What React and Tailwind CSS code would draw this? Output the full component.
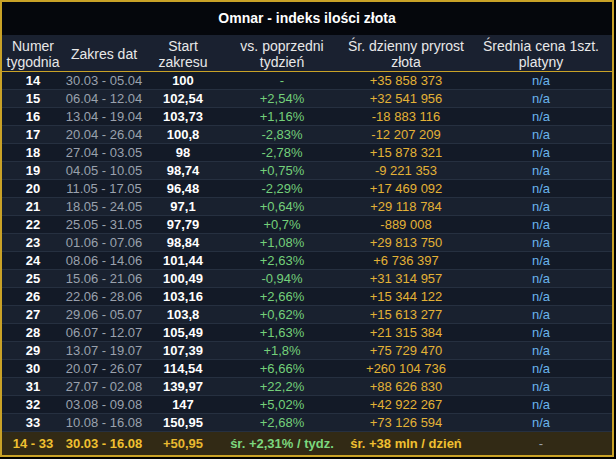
import React from 'react';

// Weekly gold index rows: [week, date range, start, vs previous, daily growth]
const rows = [
  ['14', '30.03 - 05.04', '100', '-', '+35 858 373'],
  ['15', '06.04 - 12.04', '102,54', '+2,54%', '+32 541 956'],
  ['16', '13.04 - 19.04', '103,73', '+1,16%', '-18 883 116'],
  ['17', '20.04 - 26.04', '100,8', '-2,83%', '-12 207 209'],
  ['18', '27.04 - 03.05', '98', '-2,78%', '+15 878 321'],
  ['19', '04.05 - 10.05', '98,74', '+0,75%', '-9 221 353'],
  ['20', '11.05 - 17.05', '96,48', '-2,29%', '+17 469 092'],
  ['21', '18.05 - 24.05', '97,1', '+0,64%', '+29 118 784'],
  ['22', '25.05 - 31.05', '97,79', '+0,7%', '-889 008'],
  ['23', '01.06 - 07.06', '98,84', '+1,08%', '+29 813 750'],
  ['24', '08.06 - 14.06', '101,44', '+2,63%', '+6 736 397'],
  ['25', '15.06 - 21.06', '100,49', '-0,94%', '+31 314 957'],
  ['26', '22.06 - 28.06', '103,16', '+2,66%', '+15 344 122'],
  ['27', '29.06 - 05.07', '103,8', '+0,62%', '+15 613 277'],
  ['28', '06.07 - 12.07', '105,49', '+1,63%', '+21 315 384'],
  ['29', '13.07 - 19.07', '107,39', '+1,8%', '+75 729 470'],
  ['30', '20.07 - 26.07', '114,54', '+6,66%', '+260 104 736'],
  ['31', '27.07 - 02.08', '139,97', '+22,2%', '+88 626 830'],
  ['32', '03.08 - 09.08', '147', '+5,02%', '+42 922 267'],
  ['33', '10.08 - 16.08', '150,95', '+2,68%', '+73 126 594'],
];

export default function App() {
  return (
    <div className="w-[616px] h-[459px] bg-black font-['Liberation_Sans',Arial,sans-serif]">
      <div className="w-[614px] h-[457px] border-2 border-[#c9a227] bg-[#05070c] flex flex-col">
        <div className="h-[33px] shrink-0 flex items-center justify-center text-[14px] font-bold text-white">
          Omnar - indeks ilości złota
        </div>
        <table className="w-full table-fixed border-collapse text-[13px] leading-[17px] text-center">
          <colgroup>
            <col className="w-[62px]" />
            <col className="w-[80px]" />
            <col className="w-[78px]" />
            <col className="w-[120px]" />
            <col className="w-[128px]" />
            <col className="w-[142px]" />
          </colgroup>
          <thead>
            <tr className="bg-[#1a2130] text-[#e8e8e8] text-[14px] leading-[16px] border-b border-[#c9a227]">
              <th className="font-normal h-[36px] p-0 pt-[2px]">Numer<br />tygodnia</th>
              <th className="font-normal p-0 pt-[2px]">Zakres dat</th>
              <th className="font-normal p-0 pt-[2px]">Start<br />zakresu</th>
              <th className="font-normal p-0 pt-[2px]">vs. poprzedni<br />tydzień</th>
              <th className="font-normal p-0 pt-[2px]">Śr. dzienny pryrost<br />złota</th>
              <th className="font-normal p-0 pt-[2px]">Średnia cena 1szt.<br />platyny</th>
            </tr>
          </thead>
          <tbody>
            {rows.map((r, i) => (
              <tr
                key={r[0]}
                className={i % 2 === 0 ? 'bg-[#131a27] border-b border-[#263040]' : 'bg-[#19212f] border-b border-[#263040]'}
              >
                <td className="font-bold text-white h-[17px] p-0">{r[0]}</td>
                <td className="text-[#9aa1ad] p-0">{r[1]}</td>
                <td className="font-bold text-white p-0">{r[2]}</td>
                <td className="text-[#74d07a] p-0">{r[3]}</td>
                <td className="text-[#e3b236] p-0">{r[4]}</td>
                <td className="text-[#69b4ec] p-0">n/a</td>
              </tr>
            ))}
          </tbody>
          <tfoot>
            <tr className="bg-[#322a15] font-bold text-[13px] whitespace-nowrap">
              <td className="text-[#f0c030] h-[24px] p-0">14 - 33</td>
              <td className="text-[#f0c030] p-0">30.03 - 16.08</td>
              <td className="text-[#e8b830] p-0">+50,95</td>
              <td className="text-[#7cd87e] p-0">śr. +2,31% / tydz.</td>
              <td className="text-[#f0c030] p-0">śr. +38 mln / dzień</td>
              <td className="text-[#9aa1ad] font-normal p-0">-</td>
            </tr>
          </tfoot>
        </table>
      </div>
    </div>
  );
}
